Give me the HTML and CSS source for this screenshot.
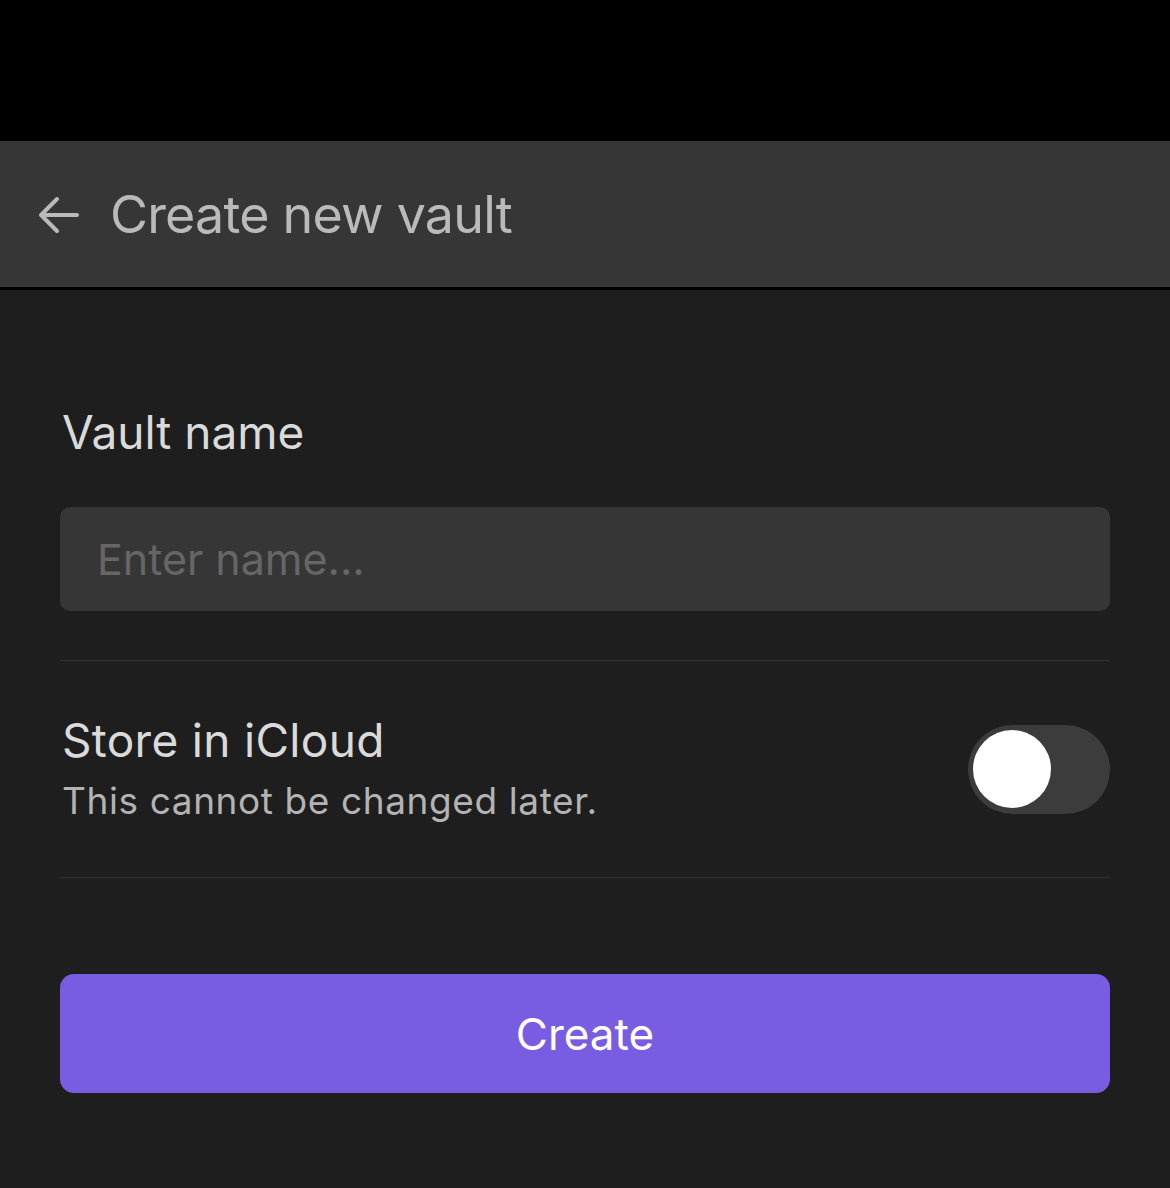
FILE: index.html
```html
<!DOCTYPE html>
<html>
<head>
<meta charset="utf-8">
<link rel="stylesheet" href="styles.css">
</head>
<body>
<div class="status"></div>
<header class="header">
  <svg class="back" width="44" height="44" viewBox="0 0 44 44" fill="none" stroke="#bababa" stroke-width="4" stroke-linecap="round" stroke-linejoin="round"><path d="M40 22H4M20 6L4 22l16 16"/></svg>
  <h1 class="title">Create new vault</h1>
</header>
<main class="content">
  <div class="label">Vault name</div>
  <div class="input">Enter name...</div>
  <div class="sep"></div>
  <div class="row">
    <div class="row-text">
      <div class="row-title">Store in iCloud</div>
      <div class="row-sub">This cannot be changed later.</div>
    </div>
    <div class="toggle"><div class="knob"></div></div>
  </div>
  <div class="sep"></div>
  <button class="create">Create</button>
</main>
</body>
</html>
```
FILE: styles.css
```css
html, body { margin: 0; padding: 0; }
body {
  background: #1e1e1e;
  font-family: Inter, "Noto Sans", sans-serif;
  width: 1170px;
  height: 1188px;
  overflow: hidden;
}
.status { height: 141px; background: #000; }
.header {
  height: 146px;
  background: #363636;
  border-bottom: 3px solid #000;
  display: flex;
  align-items: center;
  padding-left: 37px;
  gap: 29px;
}
.back { display: block; margin-top: 2px; }
.title {
  margin: 0;
  font-weight: 400;
  font-size: 52px;
  color: #bababa;
  letter-spacing: -0.8px;
}
.content { padding: 114px 60px 0 60px; }
.label {
  font-size: 46px;
  color: #dadada;
  line-height: 56px;
  padding-left: 2px;
}
.input {
  margin-top: 47px;
  height: 104px;
  border-radius: 10px;
  background: #363636;
  color: #666;
  font-size: 43px;
  display: flex;
  align-items: center;
  padding-left: 37px;
}
.sep { height: 1px; background: #333; }
.input + .sep { margin-top: 49px; }
.row {
  display: flex;
  align-items: center;
  justify-content: space-between;
  height: 216px;
}
.row-text { padding-left: 2px; }
.row-title { font-size: 46px; color: #dadada; line-height: 56px; letter-spacing: 0.3px; }
.row-sub { font-size: 37px; color: #b3b3b3; line-height: 50px; margin-top: 8px; letter-spacing: 0.6px; }
.toggle {
  width: 142px;
  height: 89px;
  border-radius: 45px;
  background: #3c3c3c;
  display: flex;
  align-items: center;
  padding-left: 5px;
  box-sizing: border-box;
}
.knob { width: 78px; height: 78px; border-radius: 50%; background: #fff; }
.create {
  display: block;
  margin-top: 96px;
  width: 100%;
  height: 119px;
  border: none;
  border-radius: 14px;
  background: #785de3;
  color: #fff;
  font-family: Inter, "Noto Sans", sans-serif;
  font-size: 44px;
  padding: 0;
}
```
